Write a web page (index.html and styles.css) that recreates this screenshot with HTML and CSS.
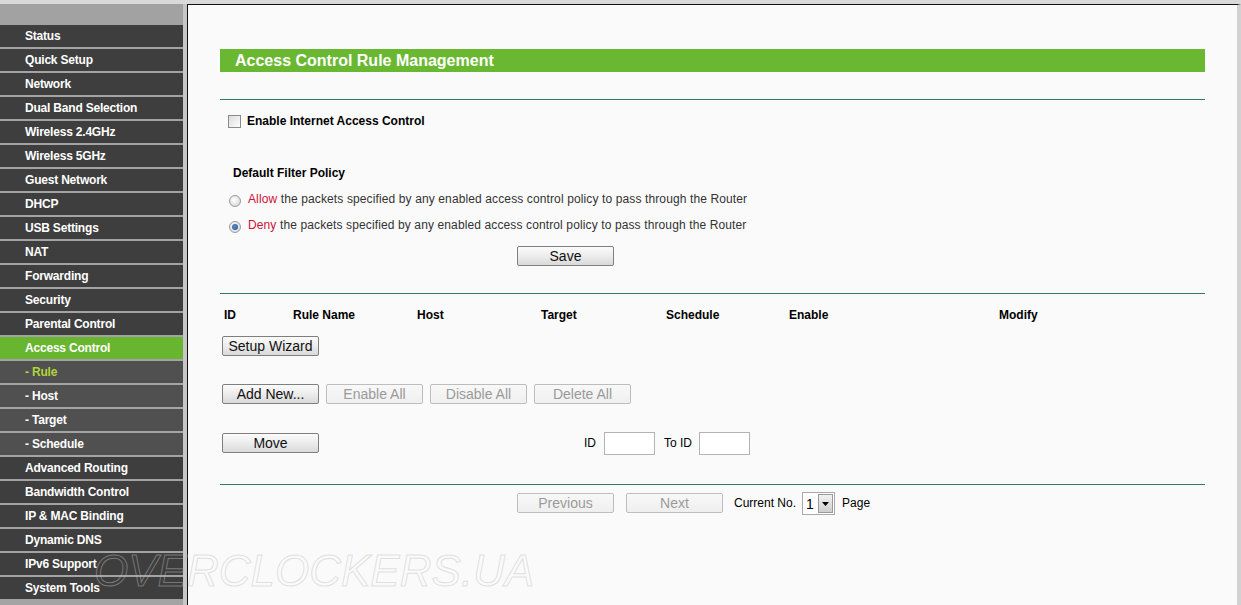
FILE: index.html
```html
<!DOCTYPE html>
<html>
<head>
<meta charset="utf-8">
<link rel="stylesheet" href="styles.css">
</head>
<body>
<div class="topstrip"></div>
<div class="page">
  <nav class="sidebar">
    <div class="side-head"></div>
    <div class="item">Status</div>
    <div class="item">Quick Setup</div>
    <div class="item">Network</div>
    <div class="item">Dual Band Selection</div>
    <div class="item">Wireless 2.4GHz</div>
    <div class="item">Wireless 5GHz</div>
    <div class="item">Guest Network</div>
    <div class="item">DHCP</div>
    <div class="item">USB Settings</div>
    <div class="item">NAT</div>
    <div class="item">Forwarding</div>
    <div class="item">Security</div>
    <div class="item">Parental Control</div>
    <div class="item active">Access Control</div>
    <div class="item sub current">- Rule</div>
    <div class="item sub">- Host</div>
    <div class="item sub">- Target</div>
    <div class="item sub">- Schedule</div>
    <div class="item">Advanced Routing</div>
    <div class="item">Bandwidth Control</div>
    <div class="item">IP &amp; MAC Binding</div>
    <div class="item">Dynamic DNS</div>
    <div class="item">IPv6 Support</div>
    <div class="item">System Tools</div>
  </nav>
  <main class="main">
    <div class="content">
      <div class="title-bar">Access Control Rule Management</div>
      <div class="rule-line first"></div>
      <div class="row check-row">
        <span class="checkbox"></span>
        <span class="bold">Enable Internet Access Control</span>
      </div>
      <div class="row policy-title bold">Default Filter Policy</div>
      <div class="row radio-row">
        <span class="radio"></span>
        <span class="radio-text"><span class="red">Allow</span> the packets specified by any enabled access control policy to pass through the Router</span>
      </div>
      <div class="row radio-row">
        <span class="radio checked"></span>
        <span class="radio-text"><span class="red">Deny</span> the packets specified by any enabled access control policy to pass through the Router</span>
      </div>
      <div class="row save-row">
        <button class="btn save">Save</button>
      </div>
      <div class="rule-line second"></div>
      <div class="row table-head bold">
        <span>ID</span><span>Rule Name</span><span>Host</span><span>Target</span><span>Schedule</span><span>Enable</span><span>Modify</span>
      </div>
      <div class="row wizard-row">
        <button class="btn">Setup Wizard</button>
      </div>
      <div class="row actions-row">
        <button class="btn">Add New...</button>
        <button class="btn disabled">Enable All</button>
        <button class="btn disabled">Disable All</button>
        <button class="btn disabled">Delete All</button>
      </div>
      <div class="row move-row">
        <button class="btn">Move</button>
        <span class="lbl-id">ID</span>
        <span class="field"></span>
        <span class="lbl-to">To ID</span>
        <span class="field"></span>
      </div>
      <div class="rule-line third"></div>
      <div class="row pager-row">
        <button class="btn disabled">Previous</button>
        <button class="btn disabled next">Next</button>
        <span class="cur">Current No.</span>
        <span class="select"><span class="sel-val">1</span><span class="sel-btn"><svg width="7" height="4" viewBox="0 0 7 4"><path d="M0 0h7L3.5 4z" fill="#000"/></svg></span></span>
        <span class="page-lbl">Page</span>
      </div>
    </div>
  </main>
</div>
<div class="watermark">OVERCLOCKERS.UA</div>
</body>
</html>
```
FILE: styles.css
```css
html, body {
  margin: 0;
  padding: 0;
  height: 605px;
  overflow: hidden;
  background: #a4a4a4;
  font-family: "Liberation Sans", Arial, sans-serif;
  font-size: 12px;
  color: #000;
}
body { position: relative; }
.topstrip {
  height: 4px;
  background: #d9d9d9;
}
.page {
  display: flex;
  height: 601px;
}
.sidebar {
  width: 183px;
  flex: none;
  background: #a4a4a4;
  border-right: 4px solid #c6c6c6;
}
.side-head {
  height: 21px;
  background: #a2a2a2;
}
.item {
  height: 22px;
  line-height: 22px;
  margin-bottom: 2px;
  padding-left: 25px;
  background: #3e3e3e;
  color: #fff;
  font-weight: bold;
  font-size: 12px;
  letter-spacing: -0.2px;
  white-space: nowrap;
}
.item.sub {
  background: #505050;
}
.item.active {
  background: #68b52f;
}
.item.current {
  color: #b0d43c;
}
.main {
  flex: 1;
  background: #fafafa;
  border-left: 1px solid #111;
  border-top: 1px solid #111;
  border-right: 4px solid #d2d2d2;
  overflow: hidden;
}
.content {
  padding: 0 32px;
}
.title-bar {
  margin-top: 44px;
  height: 23px;
  line-height: 23px;
  background: #6ab831;
  color: #fff;
  font-weight: bold;
  font-size: 16px;
  padding-left: 15px;
}
.rule-line {
  height: 1px;
  background: #2e7f60;
}
.rule-line.first { margin-top: 27px; }
.rule-line.second { margin-top: 27px; }
.rule-line.third { margin-top: 29px; }
.bold { font-weight: bold; }
.row {
  display: flex;
  align-items: center;
  height: 20px;
}
.check-row {
  margin-top: 11px;
  padding-left: 8px;
}
.checkbox {
  width: 11px;
  height: 11px;
  border: 1px solid #8a8a8a;
  background: linear-gradient(135deg, #dcdcdc, #fdfdfd);
  margin-right: 6px;
}
.policy-title {
  margin-top: 32px;
  padding-left: 13px;
}
.radio-row {
  margin-top: 6px;
  padding-left: 9px;
}
.radio {
  width: 10px;
  height: 10px;
  border-radius: 50%;
  border: 1px solid #9a9a9a;
  background: radial-gradient(circle at 40% 40%, #fff, #d0d0d0);
  margin-right: 7px;
  margin-top: 3px;
  position: relative;
}
.radio.checked::after {
  content: "";
  position: absolute;
  left: 2px;
  top: 2px;
  width: 6px;
  height: 6px;
  border-radius: 50%;
  background: radial-gradient(circle at 40% 40%, #5a8fc8, #1c4f8c);
}
.radio-text { color: #333; letter-spacing: 0.12px; }
.red { color: #d0103a; }
.save-row {
  margin-top: 11px;
  padding-left: 297px;
}
.btn {
  width: 97px;
  height: 20px;
  padding: 0;
  margin: 0;
  font-family: "Liberation Sans", Arial, sans-serif;
  font-size: 14px;
  color: #111;
  border: 1px solid #7f7f7f;
  border-radius: 2px;
  background: linear-gradient(#fbfbfb, #ececec 50%, #d9d9d9);
  line-height: 18px;
}
.btn.disabled {
  color: #9a9a9a;
  border-color: #bdbdbd;
  background: linear-gradient(#f8f8f8, #efefef);
}
.table-head {
  margin-top: 11px;
  padding-left: 4px;
  display: grid;
  grid-template-columns: 69px 124px 124px 125px 123px 210px 1fr;
  align-items: center;
}
.wizard-row {
  margin-top: 11px;
  padding-left: 2px;
}
.actions-row {
  margin-top: 28px;
  padding-left: 2px;
  gap: 7px;
}
.move-row {
  margin-top: 27px;
  height: 24px;
  padding-left: 2px;
}
.lbl-id { margin-left: 265px; }
.field {
  width: 49px;
  height: 21px;
  border: 1px solid #b3b3b3;
  background: #fff;
  margin-left: 8px;
}
.lbl-to { margin-left: 9px; margin-right: -1px; }
.pager-row {
  margin-top: 6px;
  height: 24px;
  padding-left: 297px;
}
.pager-row .btn { margin-top: 0; }
.next { margin-left: 12px; }
.cur { margin-left: 11px; }
.select {
  display: flex;
  margin-left: 6px;
  width: 31px;
  height: 21px;
  border: 1px solid #a9a9a9;
  background: #fff;
  margin-top: 1px;
}
.sel-val {
  width: 14px;
  text-align: center;
  font-size: 14px;
  line-height: 23px;
}
.sel-btn {
  width: 14px;
  margin: 1px;
  border: 1px solid #999;
  background: linear-gradient(#f2f2f2, #cfcfcf);
  display: flex;
  align-items: center;
  justify-content: center;
}
.page-lbl { margin-left: 7px; }
.watermark {
  position: absolute;
  left: 94px;
  top: 549px;
  font-family: "Liberation Sans", Arial, sans-serif;
  font-style: italic;
  font-size: 44px;
  line-height: 1;
  color: transparent;
  -webkit-text-stroke: 1px rgba(190, 190, 190, 0.45);
  white-space: nowrap;
  pointer-events: none;
}
```
